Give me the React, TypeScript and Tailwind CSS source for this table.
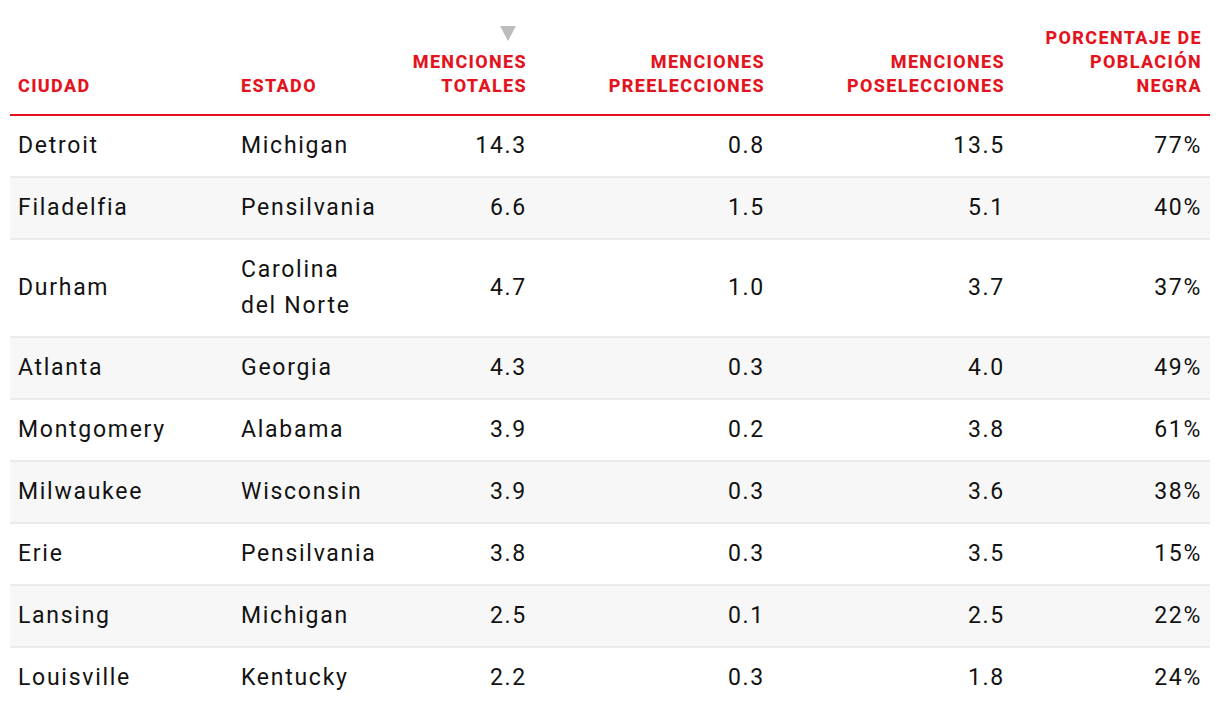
const rows = [
  { city: "Detroit", state: "Michigan", total: "14.3", pre: "0.8", post: "13.5", pct: "77%" },
  { city: "Filadelfia", state: "Pensilvania", total: "6.6", pre: "1.5", post: "5.1", pct: "40%" },
  { city: "Durham", state: "Carolina del Norte", total: "4.7", pre: "1.0", post: "3.7", pct: "37%" },
  { city: "Atlanta", state: "Georgia", total: "4.3", pre: "0.3", post: "4.0", pct: "49%" },
  { city: "Montgomery", state: "Alabama", total: "3.9", pre: "0.2", post: "3.8", pct: "61%" },
  { city: "Milwaukee", state: "Wisconsin", total: "3.9", pre: "0.3", post: "3.6", pct: "38%" },
  { city: "Erie", state: "Pensilvania", total: "3.8", pre: "0.3", post: "3.5", pct: "15%" },
  { city: "Lansing", state: "Michigan", total: "2.5", pre: "0.1", post: "2.5", pct: "22%" },
  { city: "Louisville", state: "Kentucky", total: "2.2", pre: "0.3", post: "1.8", pct: "24%" },
];

const cols = "grid grid-cols-[223px_152px_150px_238px_240px_197px]";

function SortArrow() {
  return (
    <svg width="16" height="15" viewBox="0 0 16 15" className="mb-[9px] mr-[11px]">
      <polygon points="0,0 16,0 8,15" fill="#bdbdbd" />
    </svg>
  );
}

export default function App() {
  return (
    <div className="min-h-screen bg-white px-[10px] font-['Roboto',sans-serif]">
      {/* header */}
      <div
        className={`${cols} h-[116px] items-end border-b-2 border-[#e4141e] pb-4 text-[18px] font-extrabold uppercase leading-[24px] tracking-[0.075em] text-[#e4141e]`}
      >
        <div className="px-2">Ciudad</div>
        <div className="px-2">Estado</div>
        <div className="flex flex-col items-end px-2 text-right">
          <SortArrow />
          <span>
            Menciones
            <br />
            totales
          </span>
        </div>
        <div className="px-2 text-right">
          Menciones
          <br />
          preelecciones
        </div>
        <div className="px-2 text-right">
          Menciones
          <br />
          poselecciones
        </div>
        <div className="px-2 text-right">
          Porcentaje de
          <br />
          población
          <br />
          negra
        </div>
      </div>

      {/* body */}
      {rows.map((r, i) => (
        <div
          key={r.city}
          className={`${cols} items-center py-3 text-[23px] leading-[36px] tracking-[0.075em] text-[#121212] ${
            i % 2 === 1 ? "bg-[#f7f7f7]" : "bg-white"
          } ${i < rows.length - 1 ? "border-b-2 border-[#ebebeb]" : ""}`}
        >
          <div className="px-2">{r.city}</div>
          <div className="px-2">
            {r.state === "Carolina del Norte" ? (
              <>
                Carolina
                <br />
                del Norte
              </>
            ) : (
              r.state
            )}
          </div>
          <div className="px-2 text-right">{r.total}</div>
          <div className="px-2 text-right">{r.pre}</div>
          <div className="px-2 text-right">{r.post}</div>
          <div className="px-2 text-right">{r.pct}</div>
        </div>
      ))}
    </div>
  );
}
